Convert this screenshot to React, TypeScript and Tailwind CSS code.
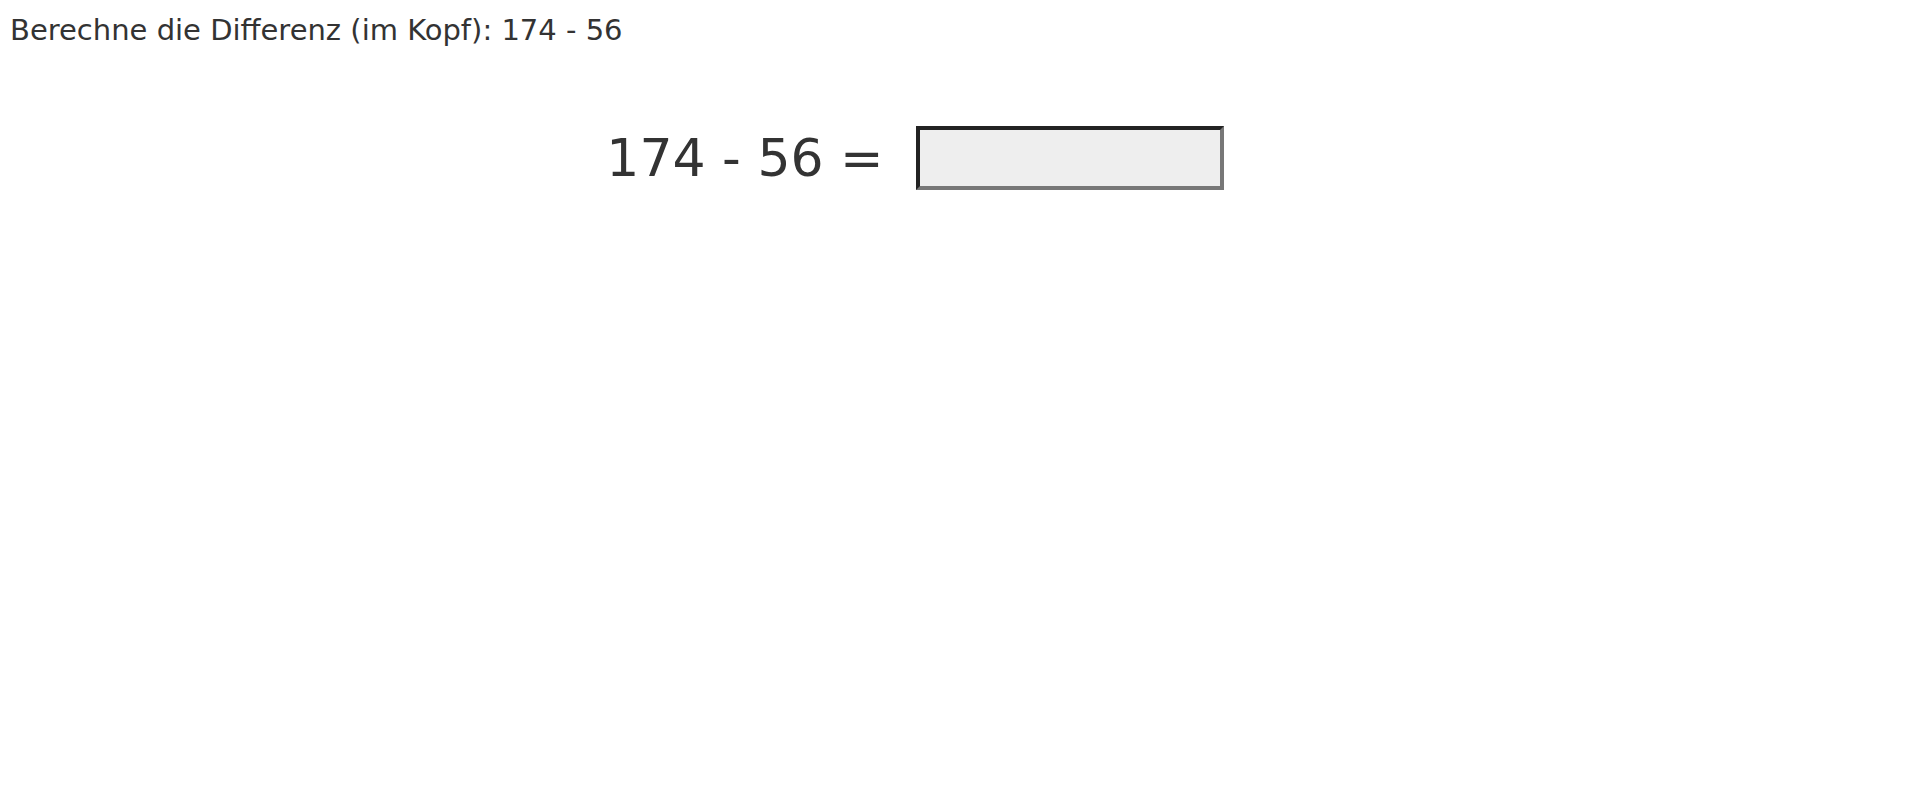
export default function App() {
  return (
    <main className="px-[10px] pt-3 font-['DejaVu_Sans',Verdana,sans-serif] text-[#333]">
      <p className="text-[29px] leading-[36px]">Berechne die Differenz (im Kopf): 174 - 56</p>
      <form className="mt-[78px] flex items-center justify-center gap-8 pr-[90px]">
        <label htmlFor="answer" className="text-[52px] leading-[64px]">174 - 56 =</label>
        <input
          id="answer"
          type="text"
          autoComplete="off"
          className="h-16 w-[308px] border-4 border-t-[#222] border-l-[#222] border-r-[#777] border-b-[#777] bg-[#eee] px-1 text-[40px] outline-none"
        />
      </form>
    </main>
  );
}
